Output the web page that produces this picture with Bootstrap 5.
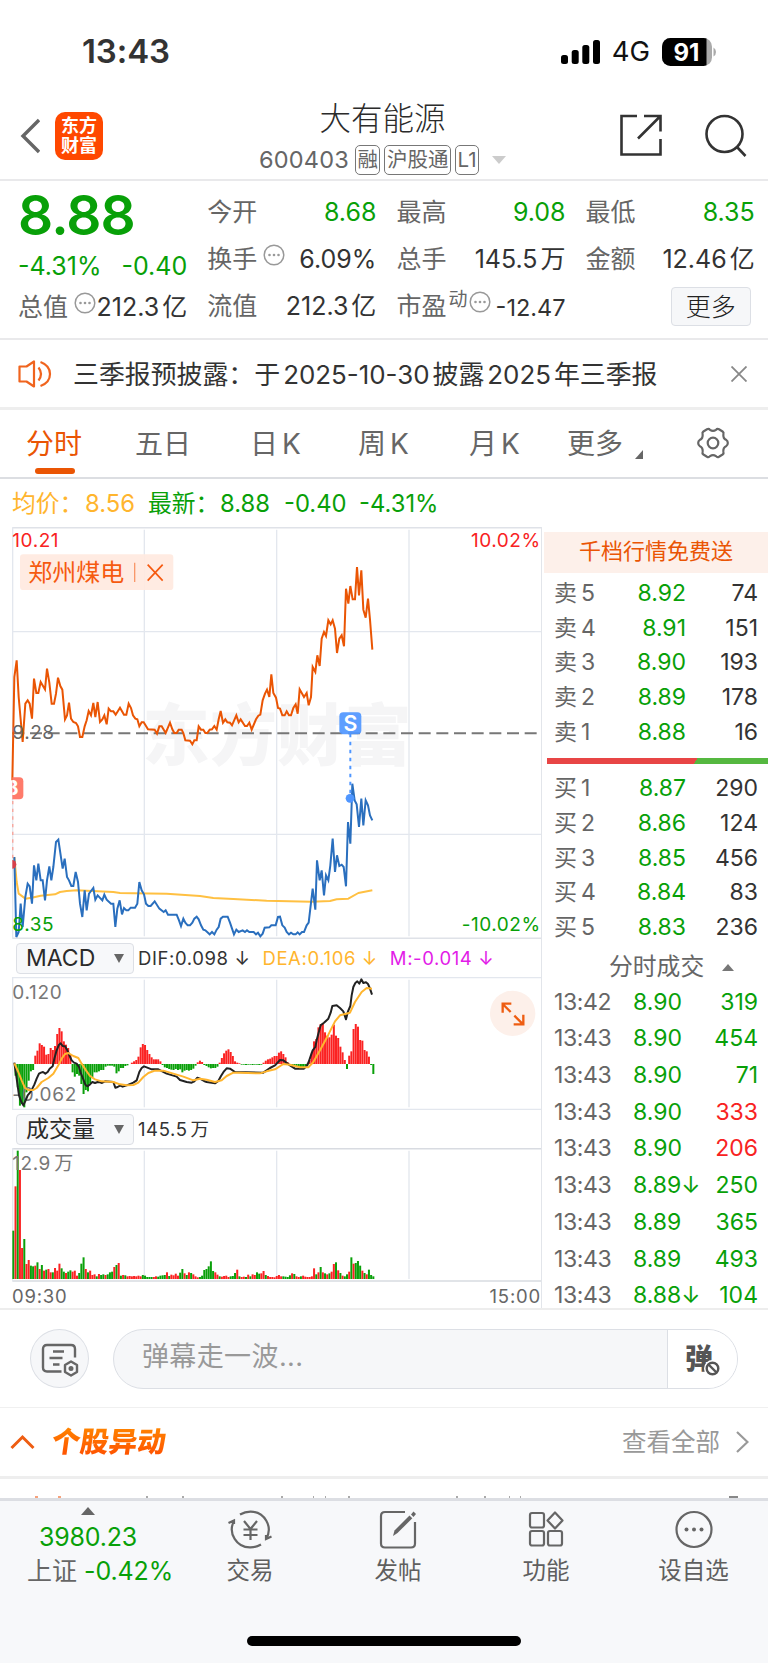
<!DOCTYPE html>
<html lang="zh-CN">
<head>
<meta charset="utf-8">
<meta name="viewport" content="width=device-width, initial-scale=1">
<title>大有能源 600403</title>
<link href="https://cdn.jsdelivr.net/npm/bootstrap@5.3.0/dist/css/bootstrap.min.css" rel="stylesheet">
<style>
:root{--up:#f82222;--down:#08a008;--brand:#ea5504;--ink:#333;--dim:#666;--rule:#e9e9eb}
body{font-family:Inter,"Noto Sans CJK SC",sans-serif;color:var(--ink);background:#fff;width:768px;height:1663px;overflow:hidden;line-height:1;font-size:25px}
svg{display:block;flex:none}
svg text{font-family:Inter,"Noto Sans CJK SC",sans-serif}
.t-down{color:var(--down)}.t-up{color:var(--up)}.t-dim{color:var(--dim)}.t-brand{color:var(--brand)}
.unit{margin-left:3px}
.status{height:96px;padding:0 52px 0 82px}
.status .clock{font-size:33px;font-weight:600;letter-spacing:-.1px;margin-top:6px}
.topbar{height:85px;border-bottom:2px solid var(--rule);padding:0 21px 0 20px}
.logo{width:48px;height:48px;border-radius:10px;background:#ff4800;color:#fff;font-weight:700;font-size:18px;line-height:20px;margin:0 0 0 15px;padding-top:4px}
.stock{font-size:31.5px;line-height:36px;color:#2b2b2b;font-weight:300}
.code{font-size:23.5px;letter-spacing:.2px}
.tag{border:1.6px solid #777;border-radius:5px;font-size:20.5px;height:30px;line-height:27px;padding:0 1.5px;margin-left:4px;white-space:nowrap}
.quote{height:159px;border-bottom:2px solid var(--rule);padding:8px 13px 0 18px;display:grid;grid-template-columns:repeat(4,169.2px);column-gap:20px}
.quote .line{height:47px;display:flex;align-items:center;white-space:nowrap}
.quote .line>:last-child{margin-left:auto}
.quote .dots{margin:-9px 0 0 6px}
.price{font-size:55px;font-weight:600;height:53px;line-height:53px;letter-spacing:-.9px}
.btn-more{width:80px;height:39px;border:1.5px solid #dcdfe5;border-radius:4px;background:#f6f7f9;font-size:25px;padding:0;line-height:34px;color:#222;margin-right:4px;font-weight:300}
.notice{height:70px;border-bottom:3px solid #eee;padding:0 21px 0 18px;font-size:25.9px}
.tabs{height:69px;border-bottom:2px solid #dcdee2;font-size:28px;color:var(--dim);display:grid;grid-template-columns:135px 115px 108px 111px 98px 121px 80px;}
.tabs>div{line-height:68px;position:relative;white-space:nowrap}
.tabs .on{padding-left:26px;color:var(--brand)}
.tabs .on::after{content:"";position:absolute;left:35px;bottom:4px;width:40px;height:6px;border-radius:3px;background:var(--brand)}
.legend{height:48px;font-size:23.8px;padding-left:12px;padding-top:2px;white-space:nowrap}
.board{height:783px;border-bottom:2px solid #ededed}
.charts{width:542px;border-right:1.5px solid #e2e5ea}
.ind{height:39px;padding-left:16px;font-size:18.5px;letter-spacing:.6px}
.sel{width:118px;height:31px;border:1.5px solid #dcdfe5;border-radius:4px;background:#f7f8fa;font-size:23px;letter-spacing:0;padding:0 9px;margin-right:4px;color:#2b2b2b}
.axis{height:28px;font-size:18.5px;letter-spacing:.8px;padding:0 0 0 12px}
.depth{width:226px;font-size:23px}
.promo{height:41px;line-height:38px;margin:5px 0 0 2px;background:#fdf0ea;font-size:22px;color:var(--brand);text-align:center}
.lvl{height:34.7px;display:grid;grid-template-columns:60px 72px 1fr;padding:0 10px 0 12px;align-items:center}
.lvl>:nth-child(n+2){text-align:right}
.ratio{height:6px;margin:9px 2px 7px 5px;background:linear-gradient(125deg,#e84545 0 65.5%,#55b840 65.5%)}
.tick{height:36.7px;display:grid;grid-template-columns:79px 70px 1fr;padding:0 10px 0 12px;align-items:center;white-space:nowrap}
.tick>:first-child{letter-spacing:-.4px}
.tick>:last-child{text-align:right}
.dm{height:98px;border-bottom:1.5px solid #f0f0f0;padding:0 30px}
.dm-set{width:59px;height:59px;border:1.5px solid #dcdfe5;border-radius:50%;background:#f6f7f9;margin-right:24px}
.dm-box{width:626px;height:60px;border:1.5px solid #dcdfe5;border-radius:30px;overflow:hidden;background:#f6f7f9}
.dm-box .ask{font-size:27px;letter-spacing:.4px;color:#999;padding:0 0 5px 28px;flex:1}
.dm-box .toggle{width:70px;height:60px;border-left:1.5px solid #dcdfe5;background:#fff;padding-left:17px;position:relative}
.dm-box .toggle b{font-size:28px;font-weight:900;color:#555}
.dm-box .toggle svg{position:absolute;left:36px;top:31px}
.move{height:71px;border-bottom:3px solid #eee;padding:0 19px 0 10px}
.move .ttl{font-size:28.5px;font-weight:900;transform:skewX(-8deg);background:linear-gradient(#ff8a00,#ff4a00);-webkit-background-clip:text;background-clip:text;color:transparent;line-height:36px;margin-left:17px}
.peek{height:19px}
.dock{height:165px;border-top:3px solid #dcdee3;background:#f7f8fa}
.dock .items{height:88px;display:grid;grid-template-columns:176px 148px 148px 148px 147px}
.dock .item{display:flex;flex-direction:column;align-items:center;font-size:23.5px;color:#5f5f5f;padding-top:9px}
.dock .item span{margin-top:8px;line-height:28px}
.home{width:274px;height:10px;border-radius:5px;background:#000;margin:47px auto 0}
</style>
</head>
<body>
<header>
  <div class="status d-flex align-items-center">
    <span class="clock">13:43</span>
    <div class="d-flex align-items-center ms-auto mt-2">
      <svg width="39" height="24" viewBox="0 0 39 24"><rect y="15" width="7" height="9" rx="2.5"/><rect x="10.7" y="10" width="7" height="14" rx="2.5"/><rect x="21.3" y="5" width="7" height="19" rx="2.5"/><rect x="32" width="7" height="24" rx="2.5"/></svg>
      <span style="font-size:27.5px;color:#111;margin:0 12px 0 12px">4G</span>
      <svg width="54" height="28" viewBox="0 0 54 28"><defs><clipPath id="bat"><rect width="50" height="28" rx="8.5"/></clipPath></defs><g clip-path="url(#bat)"><rect width="50" height="28" fill="#aaa"/><rect width="44.5" height="28"/></g><path d="M51.5 9.5q2.5 1.5 2.5 4.500t-2.500 4.500z" fill="#aaa"/><text x="24.500" y="22.500" font-size="24" font-weight="700" fill="#fff" text-anchor="middle">91</text></svg>
    </div>
  </div>
  <div class="topbar d-flex align-items-center">
    <svg width="20" height="36" viewBox="0 0 20 36" fill="none" stroke="#666" stroke-width="3.400" style="margin-top:-4px"><path d="M19 2 3 18 19 34"/></svg>
    <div class="logo text-center flex-shrink-0" style="margin-top:-4px">东方<br>财富</div>
    <div class="d-flex flex-column align-items-center" style="margin-left:152px;width:255px">
      <div class="stock">大有能源</div>
      <div class="d-flex align-items-center t-dim" style="margin-top:8px"><span class="code">600403</span><span class="tag" style="margin-left:6px">融</span><span class="tag">沪股通</span><span class="tag">L1</span><svg style="margin-left:13px" width="14" height="8" viewBox="0 0 14 8"><path d="M0 0h14L7 8z" fill="#ccc"/></svg></div>
    </div>
    <svg class="ms-auto" width="44" height="43" viewBox="0 0 44 43" fill="none" stroke="#333" stroke-width="2.600" style="margin-top:-5px"><path d="M18 2H2.500V40.500H41.500V25"/><path d="M25 2H41.500V17.500M41 2.500 19 24.500"/></svg>
    <svg width="42" height="43" viewBox="0 0 42 43" fill="none" stroke="#333" stroke-width="2.600" style="margin:-5px 0 0 42px"><circle cx="19.500" cy="20" r="18"/><path d="M32 33 40.500 42"/></svg>
  </div>
</header>

<section class="quote">
  <div>
    <div class="price t-down">8.88</div>
    <div class="line t-down" style="height:49px"><span>-4.31%</span><span>-0.40</span></div>
    <div class="line" style="height:33px"><span class="t-dim">总值</span><svg class="dots" width="22" height="22" viewBox="0 0 22 22"><circle cx="11" cy="11" r="9.800" fill="none" stroke="#999" stroke-width="1.500"/><g fill="#999"><circle cx="6.500" cy="11" r="1.300"/><circle cx="11" cy="11" r="1.300"/><circle cx="15.500" cy="11" r="1.300"/></g></svg><span>212.3<span class="unit">亿</span></span></div>
  </div>
  <div>
    <div class="line"><span class="t-dim">今开</span><span class="t-down">8.68</span></div>
    <div class="line"><span class="t-dim">换手</span><svg class="dots" width="22" height="22" viewBox="0 0 22 22"><circle cx="11" cy="11" r="9.800" fill="none" stroke="#999" stroke-width="1.500"/><g fill="#999"><circle cx="6.500" cy="11" r="1.300"/><circle cx="11" cy="11" r="1.300"/><circle cx="15.500" cy="11" r="1.300"/></g></svg><span>6.09%</span></div>
    <div class="line"><span class="t-dim">流值</span><span>212.3<span class="unit">亿</span></span></div>
  </div>
  <div>
    <div class="line"><span class="t-dim">最高</span><span class="t-down">9.08</span></div>
    <div class="line"><span class="t-dim">总手</span><span>145.5<span class="unit">万</span></span></div>
    <div class="line"><span class="t-dim">市盈</span><span class="t-dim" style="font-size:19px;margin:-14px -4px 0 2px">动</span><svg class="dots" width="22" height="22" viewBox="0 0 22 22"><circle cx="11" cy="11" r="9.800" fill="none" stroke="#999" stroke-width="1.500"/><g fill="#999"><circle cx="6.500" cy="11" r="1.300"/><circle cx="11" cy="11" r="1.300"/><circle cx="15.500" cy="11" r="1.300"/></g></svg><span style="font-size:23.500px;padding-top:3px">-12.47</span></div>
  </div>
  <div>
    <div class="line"><span class="t-dim">最低</span><span class="t-down">8.35</span></div>
    <div class="line"><span class="t-dim">金额</span><span>12.46<span class="unit">亿</span></span></div>
    <div class="line"><button class="btn btn-more">更多</button></div>
  </div>
</section>

<section class="notice d-flex align-items-center">
  <svg width="34" height="28" viewBox="0 0 34 28" fill="none" stroke="#f0641e" stroke-width="2.200" stroke-linejoin="round"><path d="M16 1.500V26.500L8.500 21.500H1.500V6.500H8.500z"/><path d="M20.500 7.500q5 6.500 0 13M22.500 2q9.500 3.500 9.500 12t-9.500 12"/></svg>
  <span style="margin:2px 0 0 21px;white-space:nowrap">三季报预披露：于<span class="unit">2025-10-30</span><span class="unit">披露</span><span class="unit">2025</span><span class="unit">年三季报</span></span>
  <svg class="ms-auto" width="16" height="16" viewBox="0 0 16 16" stroke="#888" stroke-width="1.800"><path d="M.5.5l15 15M15.500.5l-15 15"/></svg>
</section>

<nav class="tabs">
  <div class="on">分时</div><div>五日</div><div>日<span class="ms-1">K</span></div><div>周<span class="ms-1">K</span></div><div>月<span class="ms-1">K</span></div>
  <div class="d-flex align-items-center">更多<svg width="8" height="9" viewBox="0 0 8 9" style="margin:21px 0 0 12px"><path d="M8 0V9H0z" fill="#666"/></svg></div>
  <div class="d-flex align-items-center"><svg width="34" height="34" viewBox="0 0 34 34" fill="none" stroke="#666" stroke-width="2.200" stroke-linejoin="round" style="margin:-2px 0 0 8px"><path d="M11 3.300q1.800-1 3 .6 3 2 6 0 1.200-1.600 3-.6l3.600 2.200q1.400 1 .8 2.600-.6 4.400 3 6 1.400.9 1.400 2.900t-1.400 2.900q-3.600 1.600-3 6 .6 1.600-.8 2.600L23 30.700q-1.800 1-3-.6-3-2-6 0-1.200 1.600-3 .6l-3.600-2.200q-1.400-1-.8-2.600.6-4.400-3-6Q2.200 19 2.200 17t1.400-2.900q3.600-1.600 3-6Q6 6.500 7.400 5.500z"/><circle cx="17" cy="17" r="5.300"/></svg></div>
</nav>

<div class="legend d-flex align-items-center t-down">
  <span style="color:#ffb52e;width:73px">均价：</span><span style="color:#ffb52e;width:63px">8.56</span><span style="width:72px">最新：</span><span style="width:64px">8.88</span><span style="width:75px">-0.40</span><span>-4.31%</span>
</div>

<main class="board d-flex">
  <div class="charts flex-shrink-0">
    <svg id="priceChart" width="541" height="412" viewBox="0 20 1623 1236">
      <g stroke="#e3e7ee" stroke-width="4" fill="none"><path d="M37 22H1629M37 1254H1629" stroke="#dfe2e8" stroke-width="5"/><path d="M38 21V1254M433 28V1248M830 28V1248M1227 28V1248M37 334H1629M37 942H1629"/></g>
      <text x="427" y="720" font-size="202" font-weight="900" fill="#f5f5f6">东方财富</text>
      <path d="M37 639H1615" stroke="#777" stroke-width="6" stroke-dasharray="36 17"/>
      <rect x="60" y="102" width="460" height="107" rx="10" fill="#ffe9e0" fill-opacity=".92"/>
      <text x="85" y="182" font-size="72" fill="#f65a10">郑州煤电</text>
      <path d="M404 127V185" stroke="#f9986a" stroke-width="4"/><path d="M443 133l45 48M488 133l-45 48" stroke="#f65a10" stroke-width="5"/>
      <g font-size="57" letter-spacing="1.600" fill="#f82222"><text x="37" y="81">10.21</text><text x="1622" y="81" text-anchor="end">10.02%</text></g>
      <polyline fill="none" stroke="#ffc042" stroke-width="6" stroke-linejoin="round" points="43,1010 50,1085 56,1120 76,1135 95,1132 122,1126 165,1122 180,1115 200,1112 230,1110 340,1115 360,1118 400,1119 500,1120 600,1127 640,1133 700,1136 800,1141 934,1144 990,1142 1010,1137 1045,1135 1075,1118 1117,1110"/>
      <polyline fill="none" stroke="#ea5504" stroke-width="6" points="37,780 43,470 50,420 56,530 68,665 76,550 83,540 89,550 96,595 102,475 109,518 115,518 122,485 129,497 135,507 141,445 148,487 155,550 162,550 168,520 174,472 181,497 187,508 195,597 201,585 207,547 213,595 220,605 228,608 234,618 240,650 247,650 254,618 260,600 266,572 273,585 280,548 286,590 293,545 300,605 307,597 313,585 320,612 326,565 333,573 340,573 347,583 360,562 372,583 379,583 386,550 393,563 399,585 406,595 412,597 418,618 425,606 431,606 444,627 464,628 471,640 478,618 485,618 497,638 510,607 517,627 523,638 530,638 536,628 545,628 550,638 556,660 570,661 577,672 583,660 590,660 596,618 603,628 610,628 616,638 622,638 629,628 636,627 643,617 650,628 656,597 662,572 669,607 676,597 682,606 690,607 696,615 709,585 716,606 722,597 735,617 741,617 748,607 755,628 768,597 775,586 781,583 788,540 795,520 801,508 808,530 814,462 820,518 828,532 834,563 840,565 847,585 854,585 860,573 867,585 873,585 880,563 887,552 893,580 899,507 912,530 920,518 926,555 933,530 938,440 946,455 952,405 959,437 965,355 972,335 978,347 985,300 992,312 998,300 1005,325 1011,398 1018,355 1025,345 1032,378 1038,205 1045,250 1051,197 1058,237 1065,237 1071,140 1077,225 1084,150 1090,268 1097,292 1104,235 1110,298 1117,388"/>
      <polyline fill="none" stroke="#2a6fbe" stroke-width="6" points="43,1010 49,1250 56,1235 62,1150 68,1220 76,1130 83,1090 89,1098 96,1150 102,1035 109,1080 115,1030 122,1080 128,1080 135,1140 141,1080 148,1038 154,1080 160,1040 168,965 175,958 188,1045 194,1015 201,1070 207,1080 214,1097 220,1097 227,1055 234,1085 240,1150 247,1190 254,1110 260,1170 267,1120 273,1112 280,1103 286,1138 293,1125 307,1140 313,1123 320,1138 333,1150 340,1150 346,1220 352,1165 359,1140 366,1182 372,1163 379,1170 385,1170 392,1162 405,1162 412,1150 418,1085 425,1110 432,1122 438,1150 445,1157 452,1157 464,1143 478,1165 491,1175 497,1170 504,1183 530,1183 537,1200 543,1217 550,1195 556,1207 563,1215 570,1215 577,1207 583,1195 590,1189 596,1197 603,1215 610,1228 616,1230 629,1242 636,1235 643,1242 650,1228 656,1220 662,1195 669,1189 683,1189 690,1207 702,1242 709,1228 716,1235 728,1230 735,1235 741,1230 748,1235 761,1235 768,1242 774,1237 781,1248 788,1240 794,1222 808,1221 814,1215 827,1215 834,1190 840,1189 847,1215 854,1222 860,1235 867,1242 873,1237 880,1242 887,1242 893,1236 899,1242 906,1235 912,1235 920,1215 926,1207 938,1105 946,1168 951,1020 959,1080 965,1050 972,1125 978,1065 985,1080 991,1035 998,955 1005,1055 1011,1005 1018,1037 1025,1033 1031,1040 1038,1098 1044,905 1051,970 1057,790 1064,840 1070,852 1077,920 1084,835 1090,915 1097,840 1104,855 1110,885 1117,900"/>
      <g font-size="57" letter-spacing="1.600"><text x="37" y="657" fill="#666">9.28</text><text x="37" y="1231" fill="#08a008">8.35</text><text x="1622" y="1231" fill="#08a008" text-anchor="end">-10.02%</text></g>
      <svg x="37" y="760" width="40" height="300" viewBox="37 760 40 300"><path d="M38 842V1020" stroke="#ff8a7a" stroke-width="4" stroke-dasharray="10 13"/><rect x="0" y="771" width="70" height="66" rx="12" fill="#ff7b6b"/><text x="16" y="825" font-size="60" font-weight="700" fill="#fff">B</text><circle cx="36" cy="1032" r="13" fill="#d8404a"/></svg>
      <path d="M1051 640V820" stroke="#4f96ff" stroke-width="6" stroke-dasharray="11 13"/><circle cx="1050" cy="834" r="13" fill="#4f96ff"/><rect x="1018" y="576" width="66" height="66" rx="12" fill="#4f96ff" fill-opacity=".92"/><text x="1051" y="632" font-size="64" font-weight="600" fill="#fff" text-anchor="middle">S</text>
    </svg>
    <div class="ind d-flex align-items-center" style="height:38px">
      <div class="sel d-flex align-items-center justify-content-between">MACD<svg width="10" height="9" viewBox="0 0 10 9"><path d="M0 0h10L5 9z" fill="#666"/></svg></div>
      <span>DIF:0.098 ↓</span><span style="color:#ffb52e;margin-left:12px">DEA:0.106 ↓</span><span style="color:#e21ce8;margin-left:12px">M:-0.014 ↓</span>
    </div>
    <svg id="macdChart" width="541" height="133" viewBox="0 125 1623 399">
      <g stroke="#e3e7ee" stroke-width="4" fill="none"><path d="M37 127H1629M37 522H1629M38 125V524M433 133V516M830 133V516M1227 133V516"/></g>
      <g id="macdBars"></g>
      <g font-size="57" letter-spacing="2" fill="#777"><text x="37" y="190">0.120</text><text x="37" y="498">-0.062</text></g>
      <polyline fill="none" stroke="#222" stroke-width="6" stroke-linejoin="round" points="43,382 50,430 57,480 64,500 70,510 77,495 83,480 90,472 97,460 103,448 110,430 117,415 123,412 129,410 136,415 143,410 149,400 158,393 163,370 170,345 177,328 182,324 188,332 195,333 202,345 209,362 215,375 222,382 230,385 237,395 243,415 250,432 256,448 262,453 270,447 277,440 285,443 293,440 300,441 306,443 315,438 340,440 346,457 353,455 360,451 368,454 380,450 400,442 410,435 418,410 425,398 432,393 440,396 455,402 475,402 500,415 530,424 540,434 560,440 575,442 583,438 592,427 600,430 612,437 620,440 645,444 655,437 663,422 672,408 680,399 690,400 705,410 790,412 810,398 825,390 840,374 850,375 870,390 885,400 912,400 920,392 926,380 932,362 938,345 946,335 950,315 955,295 962,270 972,262 985,250 992,232 997,212 1010,210 1020,218 1030,228 1038,252 1044,228 1051,212 1055,180 1060,155 1066,143 1072,138 1078,145 1084,132 1090,143 1098,141 1104,146 1110,160 1116,178"/>
      <polyline fill="none" stroke="#ffb52e" stroke-width="6" stroke-linejoin="round" points="43,384 55,410 65,435 75,458 85,464 100,464 110,458 125,440 145,428 160,415 175,390 185,370 195,356 205,353 220,362 235,368 245,385 258,405 270,422 285,432 305,438 340,440 360,447 380,450 400,449 415,442 430,425 445,413 465,406 490,406 520,415 550,424 580,435 600,430 620,433 645,440 665,435 680,422 700,412 720,412 780,414 800,408 825,402 850,386 870,388 900,396 925,396 940,380 960,345 985,298 1005,258 1020,240 1035,236 1050,232 1065,200 1085,170 1100,158 1116,160"/>
      <circle cx="1538" cy="234" r="68" fill="#fdf0ea"/><path d="M1532 230 1508 206M1508 232V205H1534M1543 241l24 24M1570 238V267H1541" fill="none" stroke="#ee5d12" stroke-width="7"/>
    </svg>
    <div class="ind d-flex align-items-center" style="height:38px">
      <div class="sel d-flex align-items-center justify-content-between">成交量<svg width="10" height="9" viewBox="0 0 10 9"><path d="M0 0h10L5 9z" fill="#666"/></svg></div>
      <span>145.5<span class="unit">万</span></span>
    </div>
    <svg id="volChart" width="541" height="134" viewBox="0 637 1623 402">
      <g stroke="#e3e7ee" stroke-width="4" fill="none"><path d="M37 639H1629M37 1036H1629" stroke="#d8dbe1" stroke-width="5"/><path d="M38 636V1036M433 645V1030M830 645V1030M1227 645V1030"/></g>
      <g id="volBars"></g>
      <text x="37" y="703" font-size="57" letter-spacing="1.600" fill="#777">12.9<tspan dx="10">万</tspan></text>
    </svg>
    <div class="axis d-flex justify-content-between align-items-center t-dim"><span>09:30</span><span>15:00</span></div>
  </div>
  <div class="depth">
    <div class="promo">千档行情免费送</div>
    <div style="height:3px"></div>
    <div id="asks"></div>
    <div class="ratio"></div>
    <div id="bids"></div>
    <div class="d-flex align-items-center t-dim" style="height:39px;padding:6px 0 0 67px;font-size:23.800px">分时成交<svg width="12" height="7" viewBox="0 0 12 7" style="margin-left:18px"><path d="M0 7h12L6 0z" fill="#777"/></svg></div>
    <div id="ticks"></div>
  </div>
</main>

<section class="dm d-flex align-items-center">
  <div class="dm-set d-flex align-items-center justify-content-center"><svg width="38" height="34" viewBox="0 0 38 34" fill="none" stroke="#666" stroke-width="2.400" style="margin:3px 0 0 2px"><path d="M20.500 28.500H6Q2 28.500 2 24.500V6Q2 2 6 2H30Q34 2 34 6V14.500M12 8.500H23M8.500 15H21.500M12 21.500H18.500"/><path d="M30 18.500l6 3.500v7l-6 3.500-6-3.500v-7z" stroke-linejoin="round"/><circle cx="30" cy="25.500" r="1.300"/></svg></div>
  <div class="dm-box d-flex align-items-center">
    <div class="ask">弹幕走一波...</div>
    <div class="toggle d-flex align-items-center"><b>弹</b><svg width="17" height="17" viewBox="0 0 17 17"><circle cx="8.500" cy="8.500" r="8.500" fill="#fff"/><circle cx="8.500" cy="8.500" r="5.800" fill="none" stroke="#555" stroke-width="2.400"/><path d="M4.500 4.500l8 8" stroke="#555" stroke-width="2.400"/></svg></div>
  </div>
</section>

<section class="move d-flex align-items-center">
  <svg width="25" height="16" viewBox="0 0 25 16" fill="none" stroke="#ee5d12" stroke-width="3"><path d="M1.500 14 12.500 3 23.500 14"/></svg>
  <div class="ttl">个股异动</div>
  <span class="ms-auto" style="font-size:24.500px;color:#999">查看全部</span>
  <svg width="13" height="22" viewBox="0 0 13 22" fill="none" stroke="#999" stroke-width="2.200" style="margin-left:16px"><path d="M1 1 11.500 11 1 21"/></svg>
</section>
<div class="peek"><svg width="768" height="19" viewBox="0 1 768 19"><path d="M35 19h3M58 19h3" stroke="#f6a27c" stroke-width="2"/><path d="M146 19h2M182 19h2M281 19h2M313 19h1M325 19h1M348 19h2M456 19h2M484 19h2M509 19h1M520 19h1" stroke="#aaa" stroke-width="2"/><path d="M729 19h9" stroke="#888" stroke-width="2"/></svg></div>

<footer class="dock">
  <div class="items">
    <div class="text-center t-down" style="padding-top:6px;font-size:25px">
      <svg class="mx-auto" width="14" height="8" viewBox="0 0 14 8"><path d="M0 8h14L7 0z" fill="#666"/></svg>
      <div style="line-height:34px;margin-top:5px;letter-spacing:-.2px">3980.23</div>
      <div style="line-height:34px;padding-left:23px" class="text-nowrap text-start ms-1"><span class="t-dim">上证</span><span style="margin-left:7px;letter-spacing:-.1px">-0.42%</span></div>
    </div>
    <div class="item"><svg width="44" height="39" viewBox="0 0 44 39" fill="none" stroke="#666" stroke-width="2.200"><path d="M12 4.500Q17 1.600 22.500 1.600A18 18 0 0 1 38 29M33 34.500Q28 37.400 22.500 37.400A18 18 0 0 1 6 11M0.500 13 6 10.500V14M43.500 26.500 38 29V25"/><path d="M16 11l6.500 8 6.500-8M22.500 19V30M15.500 19.500h14M15.500 25h14"/></svg><span>交易</span></div>
    <div class="item"><svg width="38" height="39" viewBox="0 0 38 39" fill="none" stroke="#666" stroke-width="2.200"><path d="M26 2H6Q2 2 2 6V33.500Q2 37.500 6 37.500H32Q36 37.500 36 33.500V12"/><path d="M14 26l1.500-5.500L30.500 5.500l2.800 2.800L18.500 23z" fill="#666" stroke="none"/><path d="M32 4.500 34.500 1.500 37 4 34.500 7z" fill="#666" stroke="none"/></svg><span>发帖</span></div>
    <div class="item"><svg width="36" height="39" viewBox="0 0 36 39" fill="none" stroke="#666" stroke-width="2.200"><rect x="2" y="3" width="14" height="14.500" rx="2"/><rect x="2" y="21" width="14" height="14.500" rx="2"/><rect x="20" y="21" width="14" height="14.500" rx="2"/><path d="M27 2.500l7.500 8-7.500 8-7.500-8z" stroke-linejoin="round"/></svg><span>功能</span></div>
    <div class="item"><svg width="38" height="39" viewBox="0 0 38 39"><circle cx="19" cy="19.500" r="17.500" fill="none" stroke="#666" stroke-width="2.200"/><g fill="#666"><circle cx="11.500" cy="19.500" r="2"/><circle cx="19" cy="19.500" r="2"/><circle cx="26.500" cy="19.500" r="2"/></g></svg><span>设自选</span></div>
  </div>
  <div class="home"></div>
</footer>

<script src="https://cdn.jsdelivr.net/npm/bootstrap@5.3.0/dist/js/bootstrap.bundle.min.js"></script>
<script>
const RED = '#fb2222', GREEN = '#0aa00a', STEP = 6.6, X0 = 37;
const bar = (i, y, h, c, step) => `<rect x="${(X0 + i * step).toFixed(1)}" y="${y}" width="6" height="${h}" fill="${c}"/>`;

// MACD histogram, one value per minute
const macd = [0,-35,-70,-125,-120,-130,-85,-50,-22,-18,25,40,62,57,52,28,30,48,42,54,90,108,98,68,58,48,30,-25,-38,-30,-35,-60,-90,-78,-82,-58,-40,-25,-25,-22,-18,-18,-8,-5,-5,-5,-8,-28,-22,-12,-12,-6,-4,0,4,8,12,22,50,60,57,42,30,20,14,14,14,8,-3,-10,-12,-15,-17,-18,-15,-18,-16,-25,-20,-18,-20,-18,-14,-5,5,10,6,-3,-6,-10,-13,-12,-12,-8,4,18,32,40,44,36,24,8,4,2,-2,-2,-3,-2,-2,-3,-2,-2,-3,-2,4,10,14,16,20,24,24,34,38,30,20,5,-3,-4,-6,-8,-9,-10,-9,-8,-5,12,35,68,75,110,120,122,95,85,80,88,118,85,78,52,35,12,-15,25,38,105,120,112,72,70,42,38,22,-3,-30];
// Volume: height plus r (up) or g (down)
const vol = '145g 278r 385g 327r 93r 120g 45r 57r 40g 38g 40r 50g 30r 42g 25r 28g 30r 20r 20g 33r 25r 46r 32g 22g 18r 22g 26g 22r 25r 10r 18g 46g 65g 30r 20g 25r 12r 14r 8g 15r 12g 14g 12r 14g 20g 22g 36r 42g 48r 10g 12r 11g 8r 9r 8r 9r 8r 10r 8r 12g 10g 6g 6g 6g 6r 8r 7g 10g 11g 12g 20r 9g 13r 11r 16r 10r 19g 30g 17r 12g 20r 18g 14r 8r 5r 6g 10g 27g 30g 38g 53g 24g 20r 13r 8g 7r 9r 10r 6r 8g 9g 18g 28r 8g 6r 7r 6g 13r 8g 14r 12r 20g 16g 17r 24r 12g 9r 6r 6r 5r 9r 12r 8r 8g 7g 6g 11g 17r 15g 8r 6r 8g 10r 7r 6r 6r 8r 32r 14g 20r 36g 20r 17g 14r 17g 22r 45r 50g 26r 18g 10r 8g 14g 22r 65g 46r 48g 54g 40g 25r 18g 14r 28g 12g 8g'.split(' ');
const span = 1117 - X0 - 43 + 40;
document.getElementById('macdBars').innerHTML = macd.map((v, i) => bar(i, v > 0 ? 386 - v : 386, Math.abs(v), v > 0 ? RED : GREEN, (span + 3) / (macd.length - 1) )).join('');
document.getElementById('volBars').innerHTML = vol.map((s, i) => bar(i, 1030 - parseInt(s), parseInt(s), s.endsWith('r') ? RED : GREEN, (span + 3) / (vol.length - 1))).join('');

const level = (side, n, p, q) => `<div class="lvl"><span class="t-dim">${side}<span class="ms-1">${n}</span></span><span class="t-down">${p}</span><span>${q}</span></div>`;
document.getElementById('asks').innerHTML = [[5,'8.92',74],[4,'8.91',151],[3,'8.90',193],[2,'8.89',178],[1,'8.88',16]].map(r => level('卖', ...r)).join('');
document.getElementById('bids').innerHTML = [[1,'8.87',290],[2,'8.86',124],[3,'8.85',456],[4,'8.84',83],[5,'8.83',236]].map(r => level('买', ...r)).join('');
document.getElementById('ticks').innerHTML = [['13:42','8.90',319],['13:43','8.90',454],['13:43','8.90',71],['13:43','8.90',333,1],['13:43','8.90',206,1],['13:43','8.89↓',250],['13:43','8.89',365],['13:43','8.89',493],['13:43','8.88↓',104]]
  .map(([t, p, q, up]) => `<div class="tick"><span class="t-dim">${t}</span><span class="t-down">${p}</span><span class="${up ? 't-up' : 't-down'}">${q}</span></div>`).join('');
</script>
</body>
</html>
